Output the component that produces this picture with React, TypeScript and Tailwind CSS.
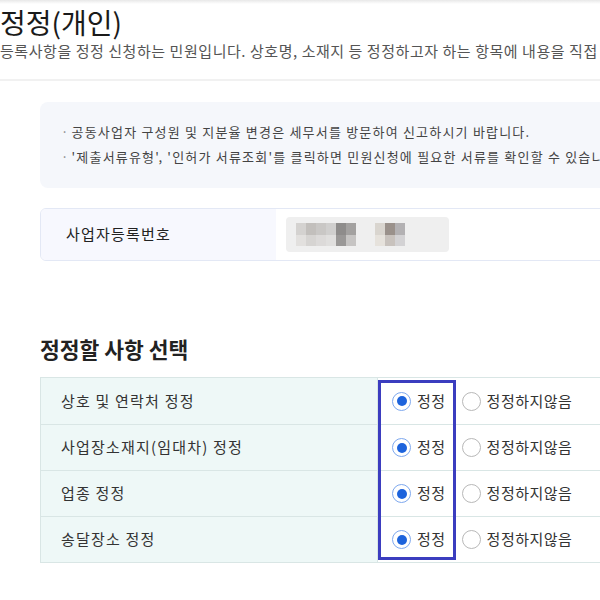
const blurA = [
  ['bg-[#d4d2d0]', 'bg-[#c2bfbc]', 'bg-[#c9c7c5]', 'bg-[#d0cfce]', 'bg-[#8e8c8b]', 'bg-[#a3a1a0]'],
  ['bg-[#e2e0de]', 'bg-[#d6d4d2]', 'bg-[#dcdad9]', 'bg-[#e0dfde]', 'bg-[#9a9897]', 'bg-[#c6c4c3]'],
]
const blurB = [
  ['bg-[#d9d5cf]', 'bg-[#9a918b]', 'bg-[#b3b1b3]'],
  ['bg-[#e6e2dc]', 'bg-[#c8c2bd]', 'bg-[#d3d2d4]'],
]

const items = ['상호 및 연락처 정정', '사업장소재지(임대차) 정정', '업종 정정', '송달장소 정정']

function Pixels({ rows }: { rows: string[][] }) {
  return (
    <div className="flex flex-col">
      {rows.map((r, i) => (
        <div key={i} className="flex">
          {r.map((c, j) => (
            <div key={j} className={`w-[10px] h-[11.5px] ${c}`} />
          ))}
        </div>
      ))}
    </div>
  )
}

function Radio({ checked, label }: { checked: boolean; label: string }) {
  return (
    <label className="flex items-center gap-[6px]">
      {checked ? (
        <span className="w-[19px] h-[19px] rounded-full border-[1.5px] border-[#7ea8ee] bg-white flex items-center justify-center">
          <span className="w-[10px] h-[10px] rounded-full bg-[#1d63dc]" />
        </span>
      ) : (
        <span className="w-[19px] h-[19px] rounded-full border border-[#b8b8b8] bg-white" />
      )}
      <span className="text-[15px] tracking-[0.5px] text-[#333]">{label}</span>
    </label>
  )
}

export default function App() {
  return (
    <div className="w-[600px] h-[600px] overflow-hidden bg-white font-['Noto_Sans_CJK_KR','Noto_Sans',sans-serif]">
      <div className="h-[4px] bg-gradient-to-b from-[#e8e8e8] to-white" />
      <h1 className="text-[28px] leading-[36px] text-[#1a1a1a] whitespace-nowrap">정정(개인)</h1>
      <p className="text-[15px] leading-[22px] tracking-[0.55px] text-[#555] whitespace-nowrap">
        등록사항을 정정 신청하는 민원입니다. 상호명, 소재지 등 정정하고자 하는 항목에 내용을 직접
      </p>
      <div className="mt-[17px] h-[2px] bg-[#f1f1f1]" />

      <div className="ml-[40px] w-[900px]">
        <div className="mt-[21px] h-[86px] rounded-[8px] bg-[#f5f7fb] pl-[21px] pt-[17px] flex flex-col">
          <p className="text-[13px] leading-[25px] tracking-[1.2px] text-[#444] whitespace-nowrap">
            <span className="text-[#888] mr-[2px]">·</span>공동사업자 구성원 및 지분율 변경은 세무서를 방문하여 신고하시기 바랍니다.
          </p>
          <p className="text-[13px] leading-[25px] tracking-[1.2px] text-[#444] whitespace-nowrap">
            <span className="text-[#888] mr-[2px]">·</span>'제출서류유형', '인허가 서류조회'를 클릭하면 민원신청에 필요한 서류를
            확인할 수 있습니다.
          </p>
        </div>

        <div className="mt-[20px] h-[53px] rounded-[6px] border border-[#e3e8f5] flex overflow-hidden">
          <div className="w-[235px] bg-[#f7f8fe] flex items-center pl-[25px] text-[15px] tracking-[1.2px] text-[#222]">
            사업자등록번호
          </div>
          <div className="flex items-center pl-[10px]">
            <div className="w-[163px] h-[35px] rounded-[4px] bg-[#efefef] flex items-center pl-[10px] gap-[19px]">
              <Pixels rows={blurA} />
              <Pixels rows={blurB} />
            </div>
          </div>
        </div>

        <h2 className="mt-[74px] text-[21.5px] leading-[28px] font-bold text-[#222]">정정할 사항 선택</h2>

        <div className="relative mt-[14px] border-t border-b border-[#d9e6e5]">
          {items.map((label, i) => (
            <div key={label} className={`flex h-[46px] ${i > 0 ? 'border-t border-[#d9e6e5]' : ''}`}>
              <div className="w-[337px] bg-[#eef8f7] border-l border-[#d9e6e5] flex items-center pl-[20px] text-[15px] tracking-[1.2px] text-[#333]">
                {label}
              </div>
              <div className="flex-1 border-l border-[#d9e6e5] flex items-center pl-[14px] gap-[16px]">
                <Radio checked label="정정" />
                <Radio checked={false} label="정정하지않음" />
              </div>
            </div>
          ))}
          <div className="absolute left-[338px] top-[2px] w-[78px] h-[180px] border-[3.5px] border-[#3b3dbf]" />
        </div>
      </div>
    </div>
  )
}
